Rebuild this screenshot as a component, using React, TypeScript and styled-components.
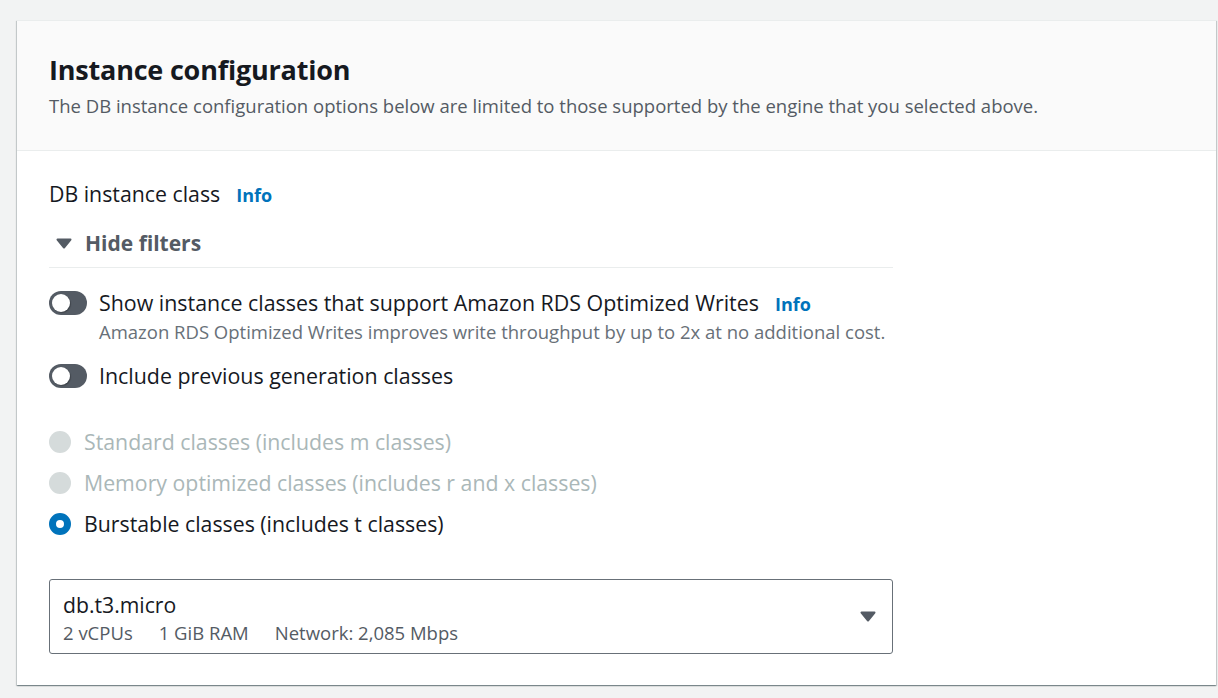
import React from "react";
import styled, { createGlobalStyle } from "styled-components";

const Global = createGlobalStyle`
  html, body { margin: 0; padding: 0; background: #f2f3f3; }
  body { font-family: "Open Sans", "Noto Sans", sans-serif; color: #16191f; }
  * { box-sizing: border-box; }
`;

const Page = styled.div`
  padding: 20px 2px 12px 17px;
`;

const Card = styled.section`
  background: #fff;
  border-top: 1px solid #eaeded;
  box-shadow: 0 1px 1px 0 rgba(0, 28, 36, 0.3), 1px 1px 1px 0 rgba(0, 28, 36, 0.15),
    -1px 1px 1px 0 rgba(0, 28, 36, 0.15);
`;

const Header = styled.header`
  background: #fafafa;
  border-bottom: 1px solid #eaeded;
  padding: 32px;
`;

const Title = styled.h2`
  margin: 0;
  font-size: 27px;
  line-height: 34px;
  font-weight: 700;
  color: #16191f;
  letter-spacing: -0.2px;
`;

const Description = styled.p`
  margin: 7px 0 0;
  font-size: 18.5px;
  line-height: 24px;
  color: #545b64;
`;

const Body = styled.div`
  padding: 28px 32px 31px 32px;
`;

const Column = styled.div`
  width: 844px;
  display: flex;
  flex-direction: column;
`;

const LabelRow = styled.div`
  display: flex;
  align-items: baseline;
  gap: 16px;
  font-size: 21.3px;
  line-height: 30px;
`;

const InfoLink = styled.a`
  color: #0073bb;
  font-weight: 700;
  font-size: 18px;
  text-decoration: none;
`;

const Expander = styled.div`
  margin-top: 18px;
  display: flex;
  align-items: center;
  gap: 13px;
  padding-left: 7px;
  font-size: 21px;
  line-height: 30px;
  font-weight: 700;
  color: #545b64;
  padding-bottom: 9px;
  border-bottom: 1px solid #eaeded;
`;

const Filters = styled.div`
  display: flex;
  flex-direction: column;
  gap: 16px;
  padding-top: 20px;
`;

const ToggleRow = styled.div`
  display: flex;
  align-items: flex-start;
  gap: 12px;
`;

const Track = styled.span`
  position: relative;
  flex: none;
  width: 38px;
  height: 24px;
  border-radius: 12px;
  background: #545b64;
  margin-top: 3px;
`;

const Knob = styled.span`
  position: absolute;
  left: 3px;
  top: 3px;
  width: 18px;
  height: 18px;
  border-radius: 50%;
  background: #fff;
  box-shadow: 1px 1px 1px rgba(0, 0, 0, 0.25);
`;

const ToggleText = styled.div`
  display: flex;
  flex-direction: column;
`;

const ToggleLabel = styled.div`
  display: flex;
  align-items: baseline;
  gap: 16px;
  font-size: 21.4px;
  line-height: 30px;
  color: #16191f;
`;

const Hint = styled.div`
  font-size: 18.5px;
  line-height: 26px;
  color: #687078;
`;

const RadioGroup = styled.div`
  display: flex;
  flex-direction: column;
  gap: 11px;
  margin-top: 36px;
`;

const RadioRow = styled.label<{ $disabled?: boolean }>`
  display: flex;
  align-items: center;
  gap: 13px;
  font-size: 21.3px;
  line-height: 30px;
  color: ${(p) => (p.$disabled ? "#aab7b8" : "#16191f")};
`;

const RadioDot = styled.span<{ $checked?: boolean; $disabled?: boolean }>`
  flex: none;
  width: 22px;
  height: 22px;
  border-radius: 50%;
  background: ${(p) => (p.$disabled ? "#d5dbdb" : "#fff")};
  border: ${(p) => (p.$checked ? "7px solid #0073bb" : p.$disabled ? "none" : "2px solid #687078")};
`;

const Select = styled.div`
  margin-top: 40px;
  border: 1px solid #687078;
  border-radius: 3px;
  height: 75px;
  padding: 0 16px 0 13px;
  display: flex;
  align-items: center;
  justify-content: space-between;
`;

const SelectText = styled.div`
  display: flex;
  flex-direction: column;
  align-self: flex-start;
  padding-top: 10px;
`;

const SelectValue = styled.div`
  font-size: 21.2px;
  line-height: 30px;
  color: #16191f;
`;

const Specs = styled.div`
  display: flex;
  gap: 26px;
  font-size: 18.5px;
  line-height: 26px;
  color: #545b64;
`;

const Caret = ({ size = 16 }: { size?: number }) => (
  <svg width={size} height={Math.round(size * 0.7)} viewBox="0 0 16 11" aria-hidden>
    <path d="M1.5 1.5h13L8 9.5z" fill="#545b64" stroke="#545b64" strokeWidth="2" strokeLinejoin="round" />
  </svg>
);

const Toggle = () => (
  <Track>
    <Knob />
  </Track>
);

export default function App() {
  return (
    <>
      <Global />
      <Page>
        <Card>
          <Header>
            <Title>Instance configuration</Title>
            <Description>
              The DB instance configuration options below are limited to those supported by the engine that you
              selected above.
            </Description>
          </Header>
          <Body>
            <Column>
              <LabelRow>
                DB instance class <InfoLink href="#">Info</InfoLink>
              </LabelRow>
              <Expander>
                <Caret size={16} />
                Hide filters
              </Expander>
              <Filters>
                <ToggleRow>
                  <Toggle />
                  <ToggleText>
                    <ToggleLabel>
                      Show instance classes that support Amazon RDS Optimized Writes
                      <InfoLink href="#">Info</InfoLink>
                    </ToggleLabel>
                    <Hint>Amazon RDS Optimized Writes improves write throughput by up to 2x at no additional cost.</Hint>
                  </ToggleText>
                </ToggleRow>
                <ToggleRow>
                  <Toggle />
                  <ToggleText>
                    <ToggleLabel>Include previous generation classes</ToggleLabel>
                  </ToggleText>
                </ToggleRow>
              </Filters>
              <RadioGroup>
                <RadioRow $disabled>
                  <RadioDot $disabled />
                  Standard classes (includes m classes)
                </RadioRow>
                <RadioRow $disabled>
                  <RadioDot $disabled />
                  Memory optimized classes (includes r and x classes)
                </RadioRow>
                <RadioRow>
                  <RadioDot $checked />
                  Burstable classes (includes t classes)
                </RadioRow>
              </RadioGroup>
              <Select>
                <SelectText>
                  <SelectValue>db.t3.micro</SelectValue>
                  <Specs>
                    <span>2 vCPUs</span>
                    <span>1 GiB RAM</span>
                    <span>Network: 2,085 Mbps</span>
                  </Specs>
                </SelectText>
                <Caret size={16} />
              </Select>
            </Column>
          </Body>
        </Card>
      </Page>
    </>
  );
}
